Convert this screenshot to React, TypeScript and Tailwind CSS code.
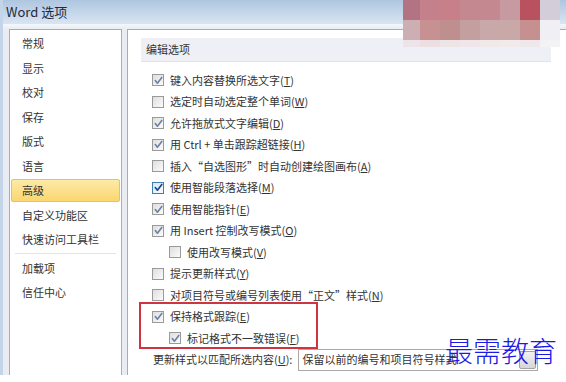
import React from "react";

const FONT = "font-['Noto_Sans_CJK_SC','Noto_Sans',sans-serif]";

function Check({ checked, focus }: { checked: boolean; focus?: boolean }) {
  return (
    <span
      className={
        focus
          ? "relative flex w-[12px] h-[12px] shrink-0 items-center justify-center border border-[#3c7fb1] bg-gradient-to-br from-[#d6e8f6] to-[#f6fbff]"
          : "relative flex w-[12px] h-[12px] shrink-0 items-center justify-center border border-[#9a9a9a] bg-gradient-to-br from-[#dedede] to-[#fbfbfb]"
      }
    >
      {checked && (
        <svg width="9" height="9" viewBox="0 0 9 9">
          <path
            d="M1.3 4.6 L3.4 7.2 L7.8 1.4"
            fill="none"
            stroke={focus ? "#1d3f7c" : "#6d80a4"}
            strokeWidth="1.6"
            strokeLinecap="round"
            strokeLinejoin="round"
          />
        </svg>
      )}
    </span>
  );
}

function Label({ t, k }: { t: string; k: string }) {
  return (
    <span className="whitespace-nowrap">
      {t}(<span className="underline underline-offset-[1px]">{k}</span>)
    </span>
  );
}

type Row = { t: string; k: string; c: boolean; focus?: boolean; indent?: boolean };

const rows: Row[] = [
  { t: "键入内容替换所选文字", k: "T", c: true },
  { t: "选定时自动选定整个单词", k: "W", c: false },
  { t: "允许拖放式文字编辑", k: "D", c: true },
  { t: "用 Ctrl + 单击跟踪超链接", k: "H", c: true },
  { t: "插入“自选图形”时自动创建绘图画布", k: "A", c: false },
  { t: "使用智能段落选择", k: "M", c: true, focus: true },
  { t: "使用智能指针", k: "E", c: true },
  { t: "用 Insert 控制改写模式", k: "O", c: true },
  { t: "使用改写模式", k: "V", c: false, indent: true },
  { t: "提示更新样式", k: "Y", c: false },
  { t: "对项目符号或编号列表使用“正文”样式", k: "N", c: false },
];

function CheckRow({ r }: { r: Row }) {
  return (
    <div
      className={
        r.indent
          ? "flex h-[21.5px] items-center gap-[6px] pl-[41px]"
          : "flex h-[21.5px] items-center gap-[6px] pl-[24px]"
      }
    >
      <Check checked={r.c} focus={r.focus} />
      <Label t={r.t} k={r.k} />
    </div>
  );
}

const nav = ["常规", "显示", "校对", "保存", "版式", "语言", "高级", "自定义功能区", "快速访问工具栏"];
const nav2 = ["加载项", "信任中心"];

const mosaic: string[][] = [
  ["#b27483", "#c4808b", "#c7808a", "#c38890", "#c48890", "#c79aa2", "#b9525f", "#d2cdd9"],
  ["#cdaeb2", "#c79192", "#bf8f8f", "#c39f9f", "#c8a8a8", "#c9a9a8", "#c68f90", "#f0f0f4"],
  ["#ece4e8", "#ecdfe2", "#ede4e6", "#eee6e8", "#efe9ea", "#f0eaeb", "#efe8ea", "#f3f3f6"],
];

export default function App() {
  return (
    <div className={`relative w-[566px] h-[382px] overflow-hidden bg-white text-[11px] text-[#333] ${FONT}`}>
      <div className="flex h-[375px] flex-col overflow-hidden border-l-[3px] border-[#c4d5e9] bg-[#e9edf2]">
        <div className="flex h-[24px] shrink-0 items-center bg-gradient-to-b from-[#aec6e0] to-[#d9e5f2] pl-[3px] text-[13px] text-[#1e2b3c]">
          Word 选项
        </div>
        <div className="h-[5px] shrink-0 bg-gradient-to-b from-[#f4f7fb] to-[#e9edf2]" />
        <div className="flex min-h-0 flex-1 gap-[5px] pl-[6px]">
          {/* left nav */}
          <div className="w-[113px] shrink-0 border-l border-r border-t border-[#a6adb5] bg-white px-[1px] pt-[1px]">
            {nav.map((n) =>
              n === "高级" ? (
                <div key={n} className="flex h-[24.5px] items-center py-[1px]">
                  <div className="flex h-full w-full items-center rounded-[2px] border border-[#e3c268] bg-gradient-to-b from-[#fdeaa6] to-[#fbd66e] pl-[10px]">
                    {n}
                  </div>
                </div>
              ) : (
                <div key={n} className="flex h-[24.5px] items-center pl-[11px]">
                  {n}
                </div>
              )
            )}
            <div className="flex h-[4px] items-center px-[4px]">
              <div className="h-px w-full bg-[#e2e4e8]" />
            </div>
            {nav2.map((n) => (
              <div key={n} className="flex h-[24.5px] items-center pl-[11px]">
                {n}
              </div>
            ))}
          </div>
          {/* right content */}
          <div className="relative min-w-0 flex-1 border-l border-t border-[#a6adb5] bg-white pt-[8px]">
            <div className="ml-[13px] flex h-[24px] w-[410px] items-center border-b border-[#e1e4ea] bg-[#eef0f5] pl-[5px]">
              编辑选项
            </div>
            <div className="mt-[7.25px]">
              {rows.map((r) => (
                <CheckRow key={r.t} r={r} />
              ))}
              <div className="relative">
                <CheckRow r={{ t: "保持格式跟踪", k: "E", c: true }} />
                <CheckRow r={{ t: "标记格式不一致错误", k: "F", c: true, indent: true }} />
                <div className="absolute left-[11px] top-[-4px] h-[47px] w-[179px] border-2 border-[#cf3540]" />
              </div>
              <div className="flex h-[21.5px] items-center pl-[25px]">
                <span className="whitespace-nowrap">
                  更新样式以匹配所选内容(<span className="underline underline-offset-[1px]">U</span>):
                </span>
                <div className="ml-[6px] flex h-[22px] w-[240px] shrink-0 items-center border border-[#a9a9a9] bg-white pl-[3px] pr-[1px]">
                  <span className="flex-1 truncate">保留以前的编号和项目符号样式</span>
                  <div className="h-[18px] w-[17px] rounded-[2px] border border-[#a3a3a3] bg-gradient-to-b from-[#f2f2f2] to-[#d6d6d6]" />
                </div>
              </div>
            </div>
          </div>
        </div>
      </div>

      {/* pixelated region top right */}
      <div className="absolute left-[403px] top-0 flex flex-col">
        {mosaic.map((row, i) => (
          <div key={i} className={i === 2 ? "flex h-[7px]" : "flex h-[20px]"}>
            {row.map((c, j) => (
              <div
                key={j}
                className={j === 0 ? "h-full w-[17px]" : "h-full w-[20px]"}
                style={{ backgroundColor: c }}
              />
            ))}
          </div>
        ))}
      </div>

      {/* watermark */}
      <div className="absolute left-[445px] top-[333px] text-[28px] leading-[34px] text-[#1b1be8] font-['Noto_Sans_CJK_SC',serif] font-light">
        最需教育
      </div>
    </div>
  );
}
